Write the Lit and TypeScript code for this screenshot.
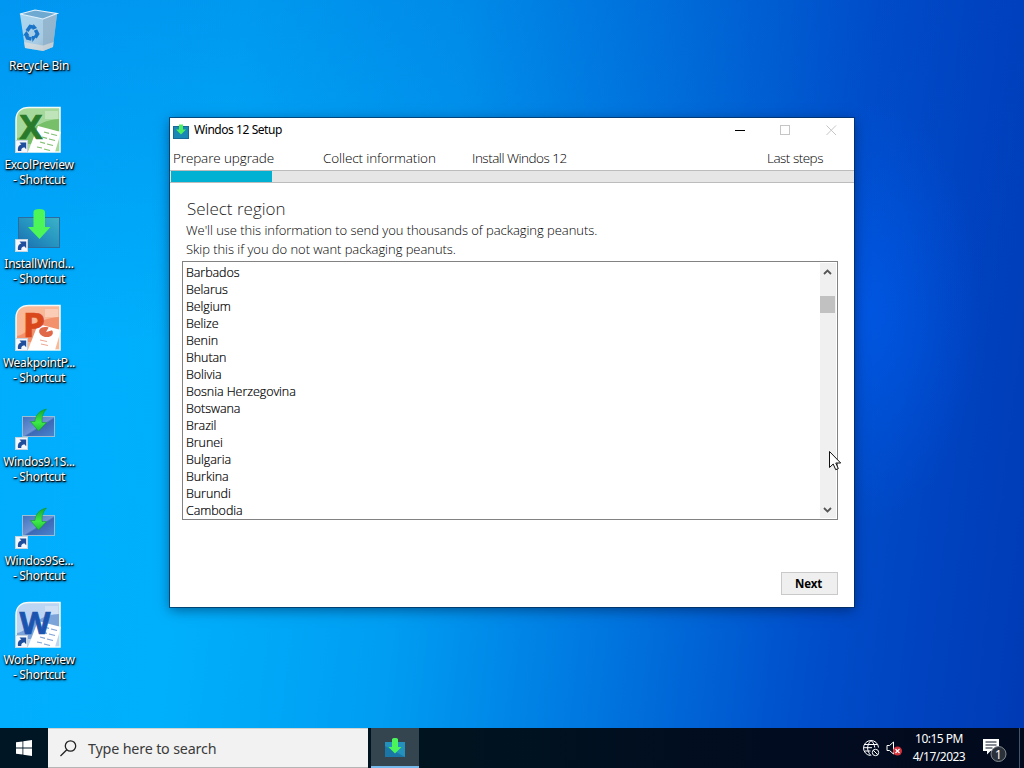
import { LitElement, html, css, svg } from "lit";
import { customElement, property } from "lit/decorators.js";

const REGIONS = [
  "Barbados", "Belarus", "Belgium", "Belize", "Benin", "Bhutan", "Bolivia",
  "Bosnia Herzegovina", "Botswana", "Brazil", "Brunei", "Bulgaria", "Burkina",
  "Burundi", "Cambodia",
];

const shortcutBadge = svg`
  <rect x="0.500" y="34.500" width="12" height="12" fill="#f4f8fc" stroke="#c6d4e0"/>
  <path d="M3 45c-.6-4 .8-6 3.400-6.600L4.500 36.500h6.700v6.700l-1.900-1.900c-2.300.5-3.200 1.700-3 3.700z" fill="#1f4e9c"/>
`;

const installArt = svg`
  <defs>
    <linearGradient id="teal" x1="1" y1="0" x2="0" y2="1">
      <stop offset="0" stop-color="#3cb3c8"/>
      <stop offset=".5" stop-color="#2594c0"/>
      <stop offset="1" stop-color="#1a6cae"/>
    </linearGradient>
  </defs>
  <rect x="3.500" y="12.500" width="41" height="30" fill="url(#teal)" stroke="#2b6d9e"/>
  <path d="M18.500 7c0-2 2-3 5.800-3S30 5 30 7v15h5.500L24.500 34 13 22h5.500z" fill="#4cf558"/>
`;

const setupArt = svg`
  <defs>
    <linearGradient id="screen" x1="0" y1="0" x2="1" y2="1">
      <stop offset="0" stop-color="#3f72be"/>
      <stop offset=".5" stop-color="#6e94d4"/>
      <stop offset=".55" stop-color="#3d68b6"/>
      <stop offset="1" stop-color="#4a86cf"/>
    </linearGradient>
    <linearGradient id="swoosh" x1="0" y1="0" x2="0" y2="1">
      <stop offset="0" stop-color="#15a52a"/>
      <stop offset=".6" stop-color="#3fea48"/>
      <stop offset="1" stop-color="#1fc234"/>
    </linearGradient>
  </defs>
  <rect x="7.500" y="13.500" width="32" height="20" fill="url(#screen)" stroke="#9dbdd3"/>
  <path d="M31.500 6C24 7.500 20.500 12.500 20 18.500h-4.500l8 9.500L31.500 19.500h-4.500c-.3-5.500.8-9.500 4.500-13.500z" fill="url(#swoosh)" stroke="#139a2b" stroke-width=".6"/>
`;

const officeArt = (letter: string, dark: string, mid: string, light: string) => svg`
  <path d="M1 46V14C1 6 6 1.500 14 1.500h31V46z" fill="${light}" stroke="#f3faf5" stroke-width="1.500"/>
  <path d="M2 32C14 30 18 15 44 13v12L30 38H2z" fill="${mid}" opacity=".65"/>
  <path d="M30 5h13v8H30z" fill="#fff" opacity=".3"/>
  <path d="M23 20l23 6-6 20H13z" fill="#fff"/>
  ${letter === "P"
    ? svg`<ellipse cx="31" cy="28" rx="7" ry="5" fill="#e0694a" transform="rotate(12 31 28)"/>
        <path d="M31 28l7-2-4-3z" fill="#fff"/>
        <path d="M25 36l7 1.500M26 40l7 1.500" stroke="#eaa793" fill="none"/>`
    : svg`<path d="M29 26l5 1.300M36 28l6 1.500M27 31l5 1.300M34 33l6 1.500M25 36l5 1.300M32 38l6 1.500M22 41l5 1M29 43l6 1.500" stroke="${mid}" stroke-width="1.200" opacity=".8" fill="none"/>`}
  <text class="letter" x="${letter === "X" ? 16 : letter === "P" ? 19 : 20}" y="33" fill="${dark}" stroke="${dark}"
    stroke-width=".7" font-size="${letter === "W" ? 30 : 34}" textLength="${letter === "X" ? 23 : letter === "P" ? 22 : 31}" lengthAdjust="spacingAndGlyphs">${letter}</text>
`;

const binArt = svg`
  <defs>
    <linearGradient id="bin" x1="0" y1="0" x2="1" y2="1">
      <stop offset="0" stop-color="#b9dcf1"/>
      <stop offset=".6" stop-color="#b4cfe2"/>
      <stop offset="1" stop-color="#94a9ba"/>
    </linearGradient>
  </defs>
  <path d="M5 7l23 5 14-5-4 33-10 4-18-3z" fill="url(#bin)" opacity=".93"/>
  <path d="M28 12l14-5-4 33-10 4z" fill="#8fb0c9" opacity=".8"/>
  <path d="M5 7l15-4 22 3.500L28 12z" fill="#6ea9d2" stroke="#e3f1fa" stroke-width="1.200"/>
  <path d="M9 35l19 3.500L38.500 35 38 40l-10 4-18-3z" fill="#e6e2dd" opacity=".6"/>
  <g fill="none" stroke="#1a74c7" stroke-width="3.600">
    <path d="M12 24l3.200-4.500 3.500.8"/>
    <path d="M20.500 23l2 4-2.300 3.500"/>
    <path d="M16.500 32l-4-1-1.300-3.500"/>
  </g>
  <path d="M18.500 17l3.500 4-4.500 2zM21.500 29l-4 6-.8-6zM8 28.500l3.500-4.500 3 4.500z" fill="#1a74c7"/>
`;

const DESKTOP_ICONS = [
  { lines: ["Recycle Bin"], art: binArt, shortcut: false },
  { lines: ["ExcolPreview", "- Shortcut"], art: officeArt("X", "#2a7a2c", "#5fb04e", "#a5d99b"), shortcut: true },
  { lines: ["InstallWind...", "- Shortcut"], art: installArt, shortcut: true },
  { lines: ["WeakpointP...", "- Shortcut"], art: officeArt("P", "#d9481a", "#ee7c55", "#f9b898"), shortcut: true },
  { lines: ["Windos9.1S...", "- Shortcut"], art: setupArt, shortcut: true },
  { lines: ["Windos9Se...", "- Shortcut"], art: setupArt, shortcut: true },
  { lines: ["WorbPreview", "- Shortcut"], art: officeArt("W", "#1c55b0", "#5b8bcb", "#bcd5f2"), shortcut: true },
];

@customElement("desktop-icon")
class DesktopIcon extends LitElement {
  @property({ attribute: false }) lines: string[] = [];
  @property({ attribute: false }) art: unknown;
  @property({ type: Boolean }) shortcut = false;

  static styles = css`
    :host {
      display: block;
      height: 99px;
      width: 78px;
      padding-top: 7px;
      box-sizing: border-box;
      text-align: center;
    }
    .art {
      display: block;
      margin: 0 0 3px 15px;
      overflow: visible;
    }
    .letter {
      font-family: "Noto Sans", sans-serif;
      font-weight: bold;
      text-anchor: middle;
    }
    .label {
      display: block;
      font: 12px/15px "Noto Sans", sans-serif;
      letter-spacing: -0.28px;
      white-space: nowrap;
      color: #fff;
      text-shadow: 1px 1px 1px #000, 0 1px 2px rgba(0, 0, 0, 0.9), 1px 1px 3px rgba(0, 0, 0, 0.6);
    }
  `;

  render() {
    return html`
      <svg class="art" width="48" height="48" viewBox="0 0 48 48">
        ${this.art} ${this.shortcut ? shortcutBadge : ""}
      </svg>
      ${this.lines.map((line) => html`<span class="label">${line}</span>`)}
    `;
  }
}

@customElement("setup-window")
class SetupWindow extends LitElement {
  static styles = css`
    :host {
      display: flex;
      flex-direction: column;
      box-sizing: border-box;
      background: #fff;
      color: #000;
      font-family: "Open Sans", "Noto Sans", sans-serif;
      font-weight: 300;
      white-space: nowrap;
    }
    .titlebar {
      display: flex;
      align-items: center;
      height: 24px;
      padding: 0 1px 1px 3px;
    }
    .title {
      flex: 1;
      margin-left: 5px;
      font: 12px/16px "Noto Sans", sans-serif;
      letter-spacing: -0.44px;
      color: #000;
    }
    .app-icon {
      margin-top: 2px;
    }
    .control {
      display: block;
      width: 45px;
      height: 24px;
    }
    .steps {
      display: grid;
      grid-template-columns: 150px 149px 295px 1fr;
      height: 27px;
      padding-left: 3px;
      font-size: 13.5px;
      line-height: 31px;
      letter-spacing: -0.12px;
    }
    .steps span:nth-child(n + 3) {
      letter-spacing: -0.5px;
    }
    .progress {
      height: 11px;
      border-top: 1px solid #bcbcbc;
      border-bottom: 1px solid #bcbcbc;
      background: #e6e6e6;
      padding-left: 1px;
    }
    .bar {
      height: 100%;
      background: #00b1d3;
    }
    .content {
      flex: 1;
      display: flex;
      flex-direction: column;
      padding: 15px 16px 12px 12px;
    }
    h1 {
      margin: 0 0 1px 5px;
      font-size: 17px;
      line-height: 22px;
      font-weight: 300;
      color: #222;
    }
    p {
      margin: 0 0 0 4px;
      font-size: 13px;
      line-height: 19px;
      letter-spacing: -0.05px;
    }
    .list {
      display: flex;
      box-sizing: border-box;
      height: 259px;
      margin-top: 2px;
      padding: 1px;
      border: 1px solid #828282;
    }
    ul {
      flex: 1;
      margin: 0;
      padding: 1px 0 0 2px;
      list-style: none;
      font-size: 12.5px;
      line-height: 17px;
      letter-spacing: -0.06px;
      -webkit-text-stroke: 0.2px #000;
    }
    .scroll {
      display: flex;
      flex-direction: column;
      width: 16px;
      background: #f0f0f0;
    }
    .track {
      flex: 1;
      padding-top: 16px;
    }
    .thumb {
      height: 17px;
      margin-right: 1px;
      background: #c1c1c1;
    }
    .arrow {
      display: block;
    }
    button {
      box-sizing: border-box;
      align-self: flex-end;
      width: 57px;
      height: 23px;
      margin-top: auto;
      padding: 0 2px 0 0;
      border: 1px solid #c9c9c9;
      background: #efefef;
      font: bold 11.5px/20px "Open Sans", sans-serif;
      letter-spacing: -0.2px;
      color: #000;
    }
  `;

  render() {
    const progress = 101;
    return html`
      <div class="titlebar">
        <svg class="app-icon" width="16" height="16" viewBox="0 0 16 16">
          <rect x="0.500" y="3.500" width="15" height="12" fill="#1a88b5" stroke="#17699a"/>
          <path d="M6 1.500h4v5h3l-5 5-5-5h3z" fill="#4fee60"/>
        </svg>
        <span class="title">Windos 12 Setup</span>
        <svg class="control" viewBox="0 0 45 24"><path d="M17 12.500h10" stroke="#000"/></svg>
        <svg class="control" viewBox="0 0 45 24"><rect x="17.500" y="7.500" width="9" height="9" fill="none" stroke="#c6c6c6"/></svg>
        <svg class="control" viewBox="0 0 45 24"><path d="M18.500 7.500l9.500 9.500m0-9.500L18.500 17" stroke="#c6c6c6"/></svg>
      </div>
      <div class="steps">
        <span>Prepare upgrade</span>
        <span>Collect information</span>
        <span>Install Windos 12</span>
        <span>Last steps</span>
      </div>
      <div class="progress"><div class="bar" style="width: ${progress}px"></div></div>
      <div class="content">
        <h1>Select region</h1>
        <p>We'll use this information to send you thousands of packaging peanuts.</p>
        <p>Skip this if you do not want packaging peanuts.</p>
        <div class="list">
          <ul>
            ${REGIONS.map((name) => html`<li>${name}</li>`)}
          </ul>
          <div class="scroll">
            <svg class="arrow" width="16" height="17" viewBox="0 0 16 17"><path d="M4 11L7.500 7.500 11 11" fill="none" stroke="#555" stroke-width="1.800"/></svg>
            <div class="track"><div class="thumb"></div></div>
            <svg class="arrow" width="16" height="17" viewBox="0 0 16 17"><path d="M4 7L7.500 10.500 11 7" fill="none" stroke="#555" stroke-width="1.800"/></svg>
          </div>
        </div>
        <button>Next</button>
      </div>
    `;
  }
}

@customElement("task-bar")
class TaskBar extends LitElement {
  static styles = css`
    :host {
      display: flex;
      height: 40px;
      background: linear-gradient(90deg, #001624, #00131f 45%, #020c20 75%, #020a1d);
      font-family: "Noto Sans", sans-serif;
      color: #fff;
      white-space: nowrap;
    }
    svg {
      display: block;
    }
    .start {
      display: flex;
      align-items: center;
      justify-content: center;
      width: 48px;
    }
    .search {
      display: flex;
      align-items: center;
      box-sizing: border-box;
      width: 320px;
      padding-left: 12px;
      gap: 11px;
      background: #f2f2f2;
      border-top: 1px solid #cfd3d4;
      border-bottom: 1px solid #b5b5b5;
      color: #3b3b3b;
      font-size: 14.3px;
      letter-spacing: -0.17px;
    }
    .app {
      display: flex;
      align-items: center;
      justify-content: center;
      box-sizing: border-box;
      width: 48px;
      margin-left: 3px;
      padding-top: 2px;
      background: #35454f;
      border-bottom: 2px solid #76b9ed;
    }
    .tray {
      display: flex;
      align-items: center;
      margin-left: auto;
    }
    .sound {
      margin-left: 6px;
    }
    .clock {
      width: 64px;
      margin-left: 5px;
      text-align: center;
      font-size: 12px;
      line-height: 18px;
      letter-spacing: -0.5px;
    }
    .notes {
      margin-left: 11px;
    }
    .count {
      font: 12px "Noto Sans", sans-serif;
      text-anchor: middle;
    }
    .peek {
      align-self: stretch;
      width: 4px;
      margin-left: 11px;
      border-left: 1px solid #46536a;
    }
  `;

  render() {
    return html`
      <div class="start">
        <svg width="16" height="16" viewBox="0 0 16 16" fill="#fff">
          <path d="M0 2.300l6.500-.9v6.200H0zM7.300 1.300L16 0v7.600H7.300zM0 8.400h6.500v6.200L0 13.700zM7.300 8.400H16V16l-8.700-1.300z"/>
        </svg>
      </div>
      <div class="search">
        <svg width="17" height="17" viewBox="0 0 17 17" fill="none" stroke="#222" stroke-width="1.300">
          <circle cx="10.500" cy="6" r="5.200"/>
          <path d="M6.800 9.700L.5 16"/>
        </svg>
        <span>Type here to search</span>
      </div>
      <div class="app">
        <svg width="22" height="22" viewBox="0 0 22 22">
          <rect x="1" y="5" width="20" height="15" fill="#2391bb"/>
          <path d="M1 20V9l20 11z" fill="#1b76a8"/>
          <path d="M8 2.500C8 1.500 9 1 11 1s3 .5 3 1.500V10h3.500L11 16.500 4.500 10H8z" fill="#4cf45c"/>
        </svg>
      </div>
      <div class="tray">
        <svg width="18" height="18" viewBox="0 0 18 18" fill="none" stroke="#fff">
          <path d="M8.500 16.500A7.500 7.500 0 1 1 16.500 8.500M9 16.500C4.500 12 4.500 6 9 1.500c2.600 2.200 3.600 4.700 3.700 7M2.500 5.500h13M2.500 12h6M1.500 8.700H10"/>
          <circle cx="13.500" cy="13.500" r="3.200"/>
          <path d="M11.200 11.200l4.600 4.600"/>
        </svg>
        <svg class="sound" width="16" height="18" viewBox="0 0 16 18">
          <path d="M1 6.500h2.500L7.500 3v12L3.500 11.500H1z" fill="none" stroke="#fff"/>
          <circle cx="11.500" cy="12" r="4.500" fill="#d3313b"/>
          <path d="M9.500 10l4 4m0-4l-4 4" stroke="#fff" stroke-width="1.200"/>
        </svg>
        <div class="clock">
          <div>10:15 PM</div>
          <div>4/17/2023</div>
        </div>
        <svg class="notes" width="26" height="28" viewBox="0 0 26 28">
          <path d="M1 5h16v12H8.500L5 20.500V17H1z" fill="#fff"/>
          <path d="M3.500 8h11M3.500 11h11M3.500 14h7" stroke="#0a1526"/>
          <circle cx="16.500" cy="20" r="7.500" fill="#2b3139" stroke="#858b92"/>
          <text class="count" x="16.500" y="24.500" fill="#fff">1</text>
        </svg>
        <div class="peek"></div>
      </div>
    `;
  }
}

@customElement("app-root")
class AppRoot extends LitElement {
  static styles = css`
    :host {
      position: relative;
      display: flex;
      flex-direction: column;
      width: 1024px;
      height: 768px;
      overflow: hidden;
      background:
        radial-gradient(ellipse 110px 210px at 872px 310px, rgba(0, 92, 240, 0.6), rgba(0, 80, 225, 0) 100%),
        linear-gradient(180deg, rgba(0, 60, 190, 0.2), rgba(0, 60, 190, 0) 45%),
        linear-gradient(97deg, #00adfe 0%, #00b0fc 22%, #009df2 42%, #0074de 62%, #004fcb 79%, #0042bf 90%, #003ab4 100%);
    }
    .desktop {
      flex: 1;
      display: flex;
      flex-direction: column;
    }
    .window {
      position: absolute;
      left: 170px;
      top: 118px;
      width: 684px;
      height: 489px;
      box-shadow: 0 0 0 1px rgba(0, 40, 80, 0.65), 0 3px 12px rgba(0, 15, 50, 0.5);
    }
    .cursor {
      position: absolute;
      left: 828px;
      top: 450px;
    }
  `;

  render() {
    return html`
      <div class="desktop">
        ${DESKTOP_ICONS.map(
          (icon) => html`<desktop-icon .lines=${icon.lines} .art=${icon.art} ?shortcut=${icon.shortcut}></desktop-icon>`
        )}
      </div>
      <task-bar></task-bar>
      <setup-window class="window"></setup-window>
      <svg class="cursor" width="14" height="21" viewBox="0 0 14 21">
        <path d="M1.500 1.500v16l3.700-3.500 2.500 5.700 2.600-1.100-2.500-5.600h4.900z" fill="#fff" stroke="#111"/>
      </svg>
    `;
  }
}
